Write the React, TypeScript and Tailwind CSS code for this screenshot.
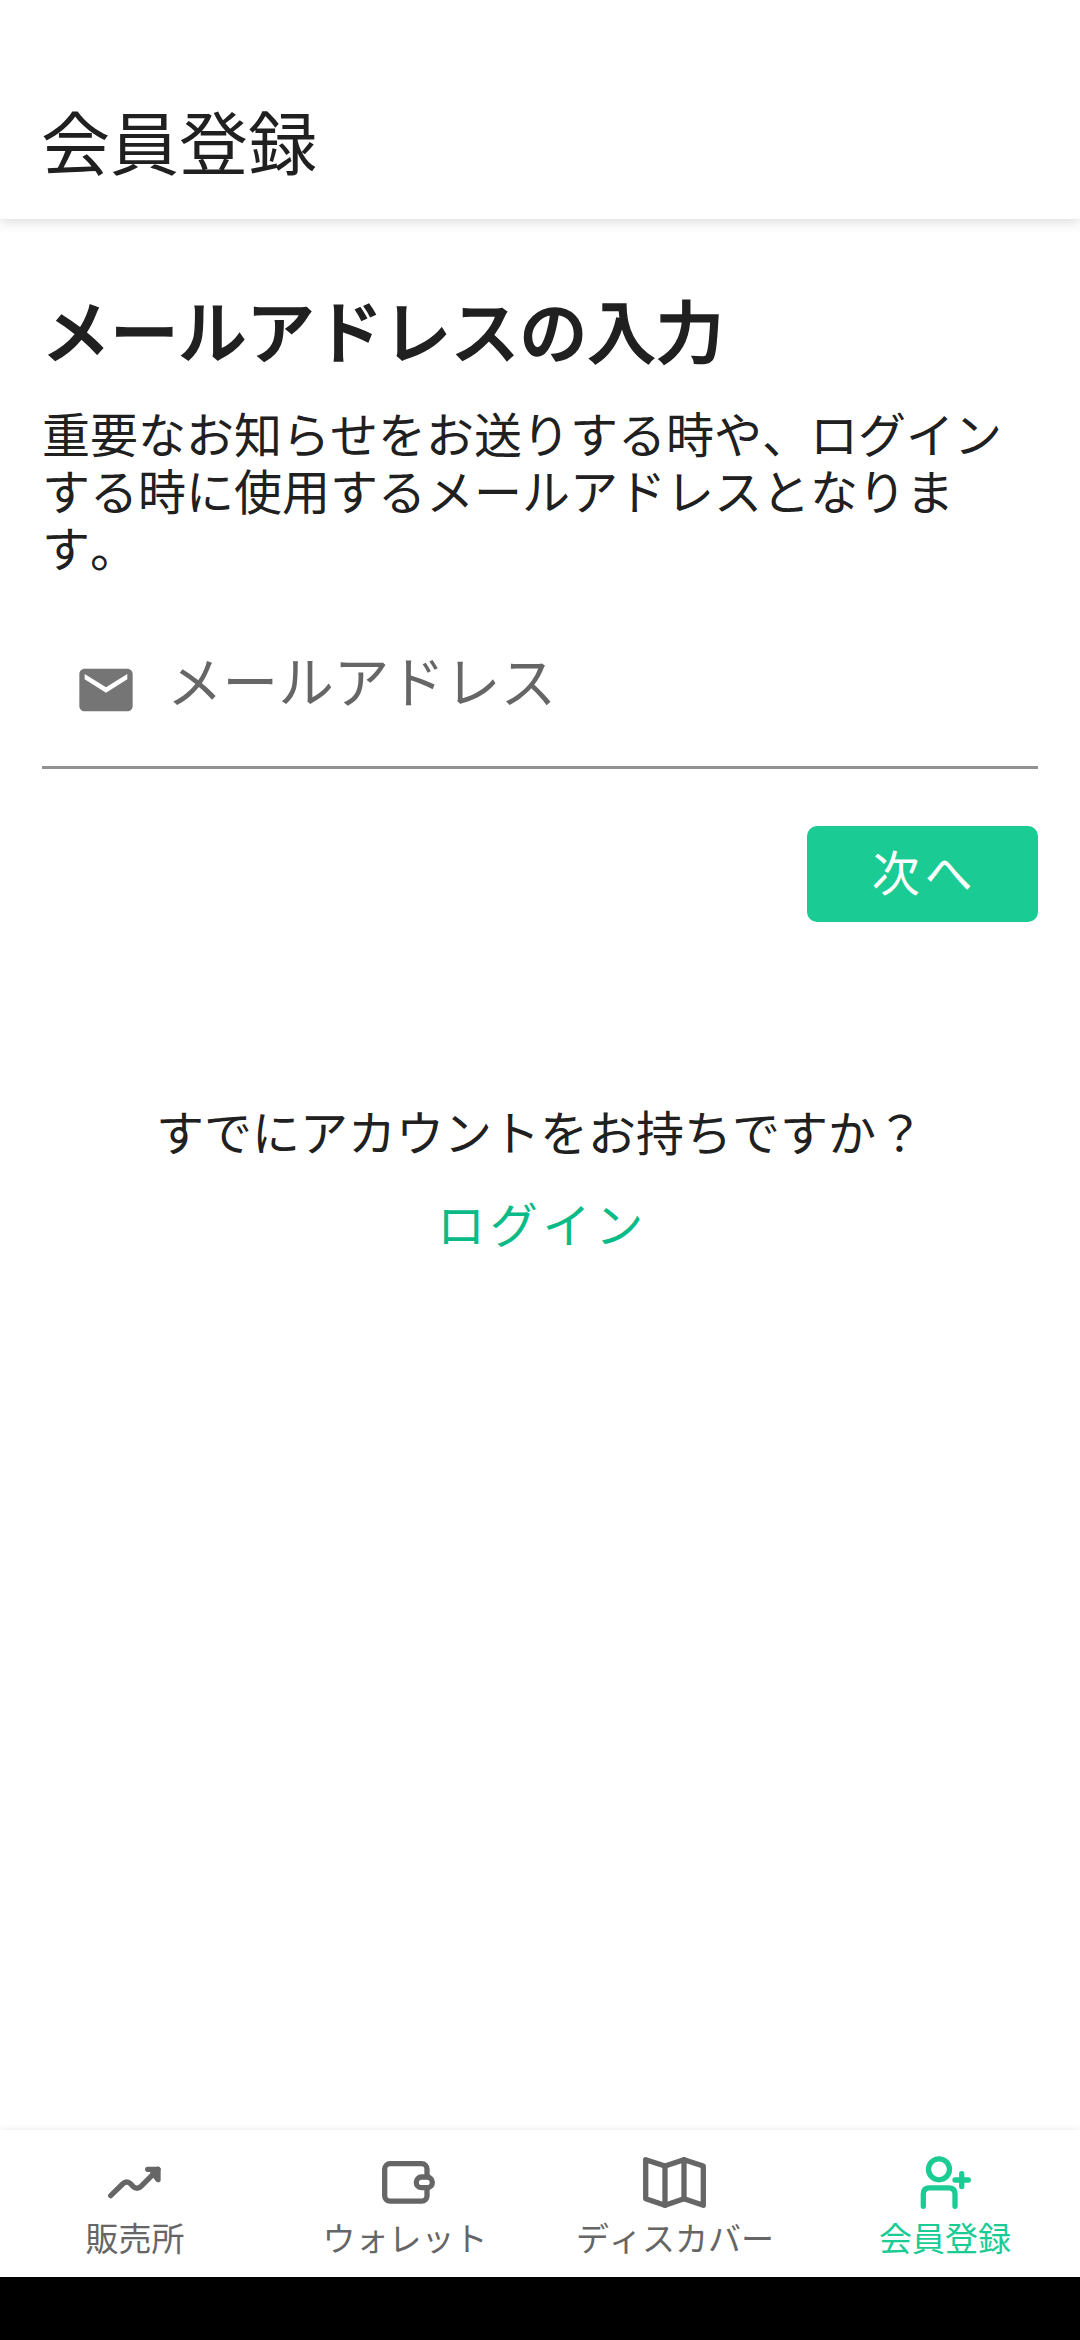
import React from 'react';

interface Tab {
  label: string;
  icon: React.ReactNode;
}

const tabs: Tab[] = [
  {
    label: '販売所',
    icon: (
      <>
        <path d="M11.7 49.7L23.6 38Q27.7 34 31.8 38L34 40.3Q38 44.3 42 40.3L59 23.3" />
        <path d="M48.7 23.3H59V33.7L54 27" />
      </>
    ),
  },
  {
    label: 'ウォレット',
    icon: (
      <>
        <rect x="15.7" y="17.7" width="42.3" height="37.4" rx="5.3" />
        <rect x="47.3" y="31" width="16" height="10.7" rx="5.3" fill="white" />
      </>
    ),
  },
  {
    label: 'ディスカバー',
    icon: (
      <>
        <path d="M6.7 13.7L26 20L45 13.7L64.3 20V59.3L45 52.7L26 59.3L6.7 52.7Z" />
        <path d="M26 20V59.3M45 13.7V52.7" />
      </>
    ),
  },
  {
    label: '会員登録',
    icon: (
      <>
        <circle cx="30" cy="23.3" r="10.5" />
        <path d="M14.3 60.3V48Q14.3 41.8 20.5 41.8H39.8Q46 41.8 46 48V60.3" />
        <path d="M46 34H59.3M52.7 27.7V40.5" />
      </>
    ),
  },
];

function Header() {
  return (
    <header className="relative h-[219px] bg-white px-[41px] pt-[100px] shadow-[0_3px_12px_rgba(0,0,0,0.14)]">
      <h1 className="text-[69px] leading-[80px]">会員登録</h1>
    </header>
  );
}

function EmailField() {
  return (
    <div className="mt-[46px] flex h-[148px] border-b-[3px] border-[#929292] pl-[32px]">
      <svg viewBox="0 0 24 24" className="mt-[37px] size-[64px] shrink-0 fill-[#757575]">
        <path d="M20 4H4c-1.1 0-1.99.9-1.99 2L2 18c0 1.1.9 2 2 2h16c1.1 0 2-.9 2-2V6c0-1.1-.9-2-2-2zm0 4l-8 5-8-5V6l8 5 8-5v2z" />
      </svg>
      <span className="mt-[18px] ml-[29px] text-[55.6px] leading-[80px] text-[#666666]">メールアドレス</span>
    </div>
  );
}

function TabBar({ active }: { active: string }) {
  return (
    <nav className="grid h-[147px] grid-cols-4 bg-white shadow-[0_-1px_6px_rgba(0,0,0,0.08)]">
      {tabs.map((tab) => (
        <button
          key={tab.label}
          className={`flex flex-col items-center pt-[16px] ${tab.label === active ? 'text-[#1acb93]' : 'text-[#666666]'}`}
        >
          <svg
            viewBox="0 0 72 72"
            className="size-[72px] fill-none stroke-current stroke-[5.3]"
            strokeLinecap="round"
            strokeLinejoin="round"
          >
            {tab.icon}
          </svg>
          <span className="text-[33px] leading-[38px]">{tab.label}</span>
        </button>
      ))}
    </nav>
  );
}

export default function App() {
  return (
    <div
      lang="ja"
      className="flex h-[2340px] w-[1080px] flex-col overflow-hidden bg-white font-['Noto_Sans_CJK_JP',sans-serif] text-[#202020] [font-kerning:none] [text-spacing-trim:space-all]"
    >
      <Header />

      <main className="flex flex-1 flex-col px-[42px] pt-[70px]">
        <h2 className="text-[68.2px] leading-[80px] font-medium [-webkit-text-stroke:1.5px_#202020]">
          メールアドレスの入力
        </h2>
        <p className="mt-[35px] text-[48px] leading-[57px]">
          重要なお知らせをお送りする時や、ログインする時に使用するメールアドレスとなります。
        </p>

        <EmailField />

        <button className="mt-[57px] h-[96px] w-[231px] self-end rounded-[10px] bg-[#1acb93] pb-[8px] pl-[4px] text-[48px] leading-[88px] tracking-[4.7px] text-white">
          次へ
        </button>

        <p className="mt-[178px] text-center text-[48px] leading-[60px]">すでにアカウントをお持ちですか？</p>
        <button className="mt-[32px] self-center pl-[5px] text-[48px] leading-[60px] tracking-[4.7px] text-[#0abb87]">
          ログイン
        </button>
      </main>

      <TabBar active="会員登録" />
      <div className="h-[63px] bg-black" />
    </div>
  );
}
